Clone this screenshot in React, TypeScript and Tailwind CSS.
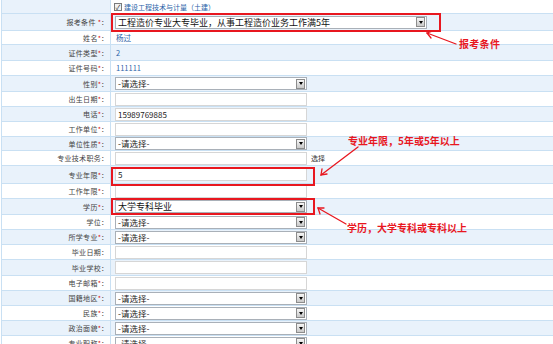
import React from "react";

type Row = {
  label: string;
  req: boolean;
  kind: "text" | "input" | "select";
  value?: string;
  h: string;
  alt: boolean;
  extra?: string;
  wide?: boolean;
  dark?: boolean;
};

const rows: Row[] = [
  { label: "报考条件", req: true, kind: "select", value: "工程造价专业大专毕业，从事工程造价业务工作满5年", h: "h-[17px]", alt: true, wide: true, dark: true },
  { label: "姓名", req: true, kind: "text", value: "杨过", h: "h-[14px]", alt: false },
  { label: "证件类型", req: true, kind: "text", value: "2", h: "h-[16px]", alt: true },
  { label: "证件号码", req: true, kind: "text", value: "111111", h: "h-[15px]", alt: false },
  { label: "性别", req: true, kind: "select", value: "-请选择-", h: "h-[16px]", alt: true },
  { label: "出生日期", req: true, kind: "input", h: "h-[15px]", alt: false },
  { label: "电话", req: true, kind: "input", value: "15989769885", h: "h-[15px]", alt: true },
  { label: "工作单位", req: true, kind: "input", h: "h-[15px]", alt: false },
  { label: "单位性质", req: true, kind: "select", value: "-请选择-", h: "h-[14px]", alt: true },
  { label: "专业技术职务", req: false, kind: "input", h: "h-[15px]", alt: false, extra: "选择" },
  { label: "专业年限", req: true, kind: "input", value: "5", h: "h-[18px]", alt: true },
  { label: "工作年限", req: true, kind: "input", h: "h-[15px]", alt: false },
  { label: "学历", req: true, kind: "select", value: "大学专科毕业", h: "h-[16px]", alt: true, dark: true },
  { label: "学位", req: false, kind: "select", value: "-请选择-", h: "h-[15px]", alt: false },
  { label: "所学专业", req: true, kind: "select", value: "-请选择-", h: "h-[15px]", alt: true },
  { label: "毕业日期", req: false, kind: "input", h: "h-[15px]", alt: false },
  { label: "毕业学校", req: false, kind: "input", h: "h-[16px]", alt: true },
  { label: "电子邮箱", req: true, kind: "input", h: "h-[15px]", alt: false },
  { label: "国籍地区", req: true, kind: "select", value: "-请选择-", h: "h-[15px]", alt: true },
  { label: "民族", req: true, kind: "select", value: "-请选择-", h: "h-[15px]", alt: false },
  { label: "政治面貌", req: true, kind: "select", value: "-请选择-", h: "h-[15px]", alt: true },
  { label: "专业职称", req: true, kind: "select", value: "-请选择-", h: "h-[15px]", alt: false },
];

function Select({ value, wide, dark }: { value?: string; wide?: boolean; dark?: boolean }) {
  return (
    <div className={`flex h-[13px] items-center border border-[#a9b0b8] bg-white ${wide ? "w-[312px]" : "w-[192px]"}`}>
      <span className={`flex-1 whitespace-nowrap pl-[2px] leading-[11px] ${dark ? "text-[9px] text-[#111]" : "text-[8.5px] text-[#222]"}`}>
        {value}
      </span>
      <span className="mr-[1px] flex h-[10px] w-[9px] items-center justify-center border border-[#8c8c8c] bg-[linear-gradient(#f6f6f6,#c9c9c9)]">
        <span className="border-x-[2.5px] border-t-[3px] border-x-transparent border-t-black" />
      </span>
    </div>
  );
}

function Input({ value }: { value?: string }) {
  return (
    <div className="flex h-[13px] w-[192px] items-center border border-[#d6d6d6] bg-white pl-[2px] text-[8px] leading-[11px] text-[#222]">
      {value}
    </div>
  );
}

export default function App() {
  return (
    <div
      className="relative h-[344px] w-[553px] overflow-hidden bg-white"
      style={{ fontFamily: '"Noto Sans CJK SC", "Liberation Sans", sans-serif' }}
    >
      <div className="ml-[1px] border-l border-[#c9e0f3]">
        <div className="flex h-[14px] border-b border-[#c9e0f3]">
          <div className="w-[109px] border-r border-[#c9e0f3] bg-[#e9f2fb]" />
          <div className="flex items-center gap-[2px] pl-[3px]">
            <span className="flex h-[8px] w-[8px] items-center justify-center border border-[#7a7a7a] bg-[#f2f2f2] text-[7px] leading-[8px] text-[#333]">
              ✓
            </span>
            <span className="text-[7px] leading-[10px] text-[#2a63a8]">建设工程技术与计量（土建）</span>
          </div>
        </div>
        {rows.map((r) => (
          <div key={r.label} className={`flex border-b border-[#c9e0f3] ${r.h} ${r.alt ? "bg-[#e9f2fb]" : "bg-white"}`}>
            <div className="flex w-[109px] items-center justify-end border-r border-[#c9e0f3] pr-[2px] text-[7px] leading-[10px] whitespace-nowrap text-[#444]">
              <span className="tracking-[0.3px]">{r.label}</span>
              {r.label === "报考条件" && <span className="w-[2px]" />}
              {r.req && <span className="text-[#e01010]">*</span>}
              <span>：</span>
            </div>
            <div className="flex items-center gap-[4px] pl-[4px]">
              {r.kind === "text" && <span className="pl-[1px] text-[7.5px] leading-[10px] text-[#2a63a8]">{r.value}</span>}
              {r.kind === "input" && <Input value={r.value} />}
              {r.kind === "select" && <Select value={r.value} wide={r.wide} dark={r.dark} />}
              {r.extra && <span className="text-[7px] leading-[10px] text-[#333]">{r.extra}</span>}
            </div>
          </div>
        ))}
      </div>

      {/* annotation boxes */}
      <div className="absolute left-[111px] top-[13px] h-[19px] w-[330px] border-2 border-[#e8171f]" />
      <div className="absolute left-[111px] top-[167px] h-[19px] w-[204px] border-2 border-[#e8171f]" />
      <div className="absolute left-[111px] top-[198px] h-[17px] w-[204px] border-2 border-[#e8171f]" />

      <svg className="pointer-events-none absolute inset-0" width="553" height="344" viewBox="0 0 553 344">
        <g stroke="#e8171f" strokeWidth="1.3" fill="none" strokeLinecap="round">
          <line x1="456" y1="44" x2="427" y2="33" />
          <polyline points="433,31 427,33 431,38" />
          <line x1="358" y1="147" x2="321" y2="175" />
          <polyline points="322,169 321,175 327,174" />
          <line x1="346" y1="224" x2="318" y2="208" />
          <polyline points="324,208 318,208 320,214" />
        </g>
      </svg>

      <span className="absolute left-[459px] top-[38px] text-[10px] font-bold leading-[12px] tracking-[0.3px] text-[#e8171f]">报考条件</span>
      <span className="absolute left-[348px] top-[135px] text-[10px] font-bold leading-[12px] text-[#e8171f]">专业年限，5年或5年以上</span>
      <span className="absolute left-[347px] top-[222px] text-[10px] font-bold leading-[12px] text-[#e8171f]">学历，大学专科或专科以上</span>
    </div>
  );
}
